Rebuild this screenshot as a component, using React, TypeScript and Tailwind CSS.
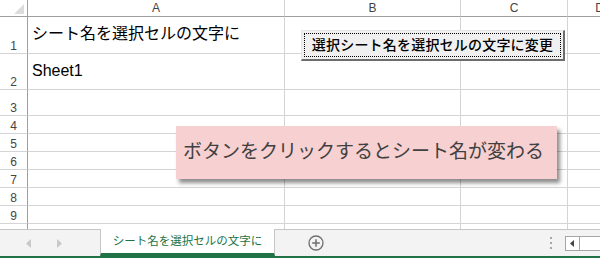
const jp = "font-['Liberation_Sans','Noto_Sans_CJK_JP',sans-serif]";

const rows = [
  { n: "1", h: "h-[37px]", a: "シート名を選択セルの文字に" },
  { n: "2", h: "h-[36px]", a: "Sheet1" },
  { n: "3", h: "h-[26px]", a: "" },
  { n: "4", h: "h-[18px]", a: "" },
  { n: "5", h: "h-[18px]", a: "" },
  { n: "6", h: "h-[18px]", a: "" },
  { n: "7", h: "h-[18px]", a: "" },
  { n: "8", h: "h-[18px]", a: "" },
  { n: "9", h: "h-[18px]", a: "" },
  { n: "10", h: "h-[18px]", a: "" },
];

const Row = ({ n, h, a }: { n: string; h: string; a: string }) => {
  return (
    <div className={`flex shrink-0 ${h}`}>
      <div className="w-[28px] shrink-0 flex items-end justify-center border-r border-b border-r-[#9f9f9f] border-b-[#d4d4d4] text-[12px] leading-[14px] text-[#444] font-['Liberation_Sans',sans-serif]">
        {n}
      </div>
      <div className="w-[257px] shrink-0 border-r border-b border-[#d4d4d4] pl-[4px] pt-[5px] text-[16px] leading-[24px] text-black whitespace-nowrap">
        {a}
      </div>
      <div className="w-[176px] shrink-0 border-r border-b border-[#d4d4d4]" />
      <div className="w-[107px] shrink-0 border-r border-b border-[#d4d4d4]" />
      <div className="w-[64px] shrink-0 border-r border-b border-[#d4d4d4]" />
    </div>
  );
};

export default function App() {
  return (
    <div className={`relative w-[600px] h-[258px] overflow-hidden bg-white flex flex-col ${jp}`}>
      {/* Sheet grid */}
      <div className="h-[229px] shrink-0 overflow-hidden flex flex-col">
        {/* Column header */}
        <div className="flex h-[17px] shrink-0 text-[12px] text-[#444] font-['Liberation_Sans',sans-serif]">
          <div className="w-[28px] shrink-0 border-r border-b border-[#9f9f9f] flex items-end justify-end pr-[3px] pb-[2px]">
            <svg width="10" height="10" viewBox="0 0 10 10">
              <polygon points="10,0 10,10 0,10" fill="#dcdcdc" />
            </svg>
          </div>
          <div className="w-[257px] shrink-0 border-r border-b border-r-[#d4d4d4] border-b-[#9f9f9f] flex items-end justify-center leading-[15px]">A</div>
          <div className="w-[176px] shrink-0 border-r border-b border-r-[#d4d4d4] border-b-[#9f9f9f] flex items-end justify-center leading-[15px]">B</div>
          <div className="w-[107px] shrink-0 border-r border-b border-r-[#d4d4d4] border-b-[#9f9f9f] flex items-end justify-center leading-[15px]">C</div>
          <div className="w-[64px] shrink-0 border-r border-b border-r-[#d4d4d4] border-b-[#9f9f9f] flex items-end justify-center leading-[15px]">D</div>
        </div>
        {rows.map((r) => (
          <Row key={r.n} {...r} />
        ))}
      </div>

      {/* Sheet tabs */}
      <div className="h-[29px] shrink-0 flex bg-[#f3f3f3] border-b-2 border-[#217346]">
        <div className="w-[100px] shrink-0 border-t border-[#c6c6c6] flex items-center pl-[26px] gap-[24px]">
          <svg width="6" height="9" viewBox="0 0 6 9">
            <polygon points="5,0 5,9 0,4.5" fill="#c8c8c8" />
          </svg>
          <svg width="6" height="9" viewBox="0 0 6 9">
            <polygon points="1,0 1,9 6,4.5" fill="#c8c8c8" />
          </svg>
        </div>
        <div className="w-[175px] shrink-0 bg-white border-x border-[#c6c6c6] border-b-[3px] border-b-[#217346] flex items-center justify-center text-[11.5px] text-[#217346] pt-[2px]">
          シート名を選択セルの文字に
        </div>
        <div className="w-[84px] shrink-0 border-t border-[#c6c6c6] flex items-center justify-center pr-[3px]">
          <svg width="16" height="16" viewBox="0 0 16 16">
            <circle cx="8" cy="8" r="7" fill="none" stroke="#6f6f6f" strokeWidth="1.3" />
            <path d="M8 4.2v7.6M4.2 8h7.6" stroke="#6f6f6f" strokeWidth="1.5" />
          </svg>
        </div>
        <div className="flex-1 border-t border-[#c6c6c6] flex items-center justify-end pr-[13px]">
          <div className="flex flex-col gap-[3px]">
            <div className="w-[2px] h-[2px] bg-[#a6a6a6]" />
            <div className="w-[2px] h-[2px] bg-[#a6a6a6]" />
            <div className="w-[2px] h-[2px] bg-[#a6a6a6]" />
          </div>
        </div>
        <div className="w-[35px] shrink-0 border-t border-[#c6c6c6] flex items-center">
          <div className="h-[15px] flex-1 flex border border-r-0 border-[#a6a6a6] bg-white">
            <div className="w-[14px] border-r border-[#a6a6a6] flex items-center justify-center">
              <svg width="5" height="7" viewBox="0 0 5 7">
                <polygon points="4,0 4,7 0,3.5" fill="#444" />
              </svg>
            </div>
          </div>
        </div>
      </div>

      {/* Form button */}
      <div className="absolute left-[301px] top-[30px] w-[264px] h-[31px] bg-[#f0f0f0] border-t border-l border-[#e6e6e6] border-r-2 border-b-2 border-r-[#6d6d6d] border-b-[#6d6d6d] p-[2px]">
        <div className="h-full border border-dotted border-black flex items-center justify-center text-[14px] font-medium text-black tracking-[0.2px]">
          選択シート名を選択セルの文字に変更
        </div>
      </div>

      {/* Callout */}
      <div className="absolute left-[176px] top-[126px] w-[381px] h-[53px] bg-[#f7d0d1] shadow-[3px_4px_4px_rgba(0,0,0,0.45)] flex items-center pl-[7px] text-[19px] text-[#404040] whitespace-nowrap">
        ボタンをクリックするとシート名が変わる
      </div>
    </div>
  );
}
